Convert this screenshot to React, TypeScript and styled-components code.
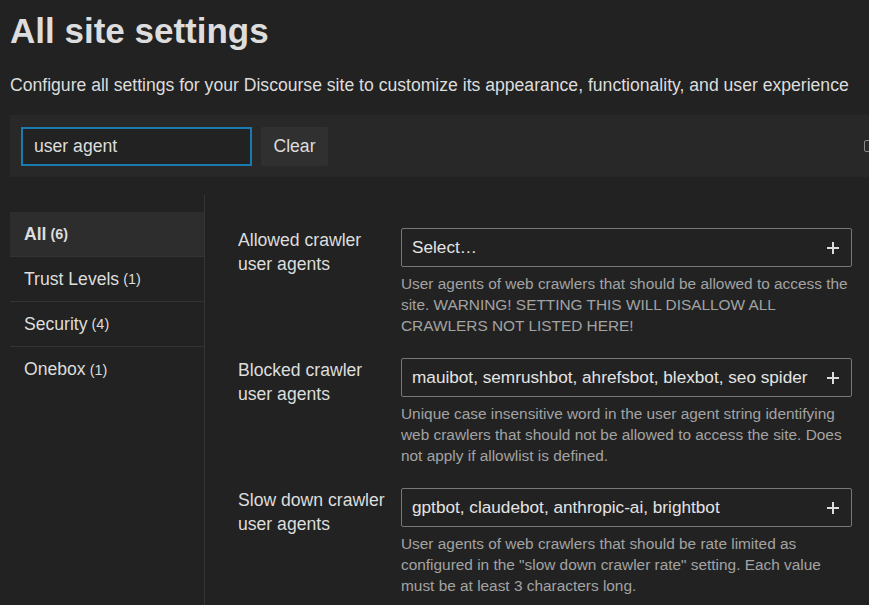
import styled, { createGlobalStyle } from "styled-components";

// 한 줄에 하나의 설정 항목
interface ISetting {
  id: string;
  label: string;
  value: string;
  description: string;
}

interface ICategory {
  name: string;
  count: number;
  active?: boolean;
}

const categories: ICategory[] = [
  { name: "All", count: 6, active: true },
  { name: "Trust Levels", count: 1 },
  { name: "Security", count: 4 },
  { name: "Onebox", count: 1 },
];

const settings: ISetting[] = [
  {
    id: "allowed",
    label: "Allowed crawler user agents",
    value: "Select…",
    description:
      "User agents of web crawlers that should be allowed to access the site. WARNING! SETTING THIS WILL DISALLOW ALL CRAWLERS NOT LISTED HERE!",
  },
  {
    id: "blocked",
    label: "Blocked crawler user agents",
    value: "mauibot, semrushbot, ahrefsbot, blexbot, seo spider",
    description:
      "Unique case insensitive word in the user agent string identifying web crawlers that should not be allowed to access the site. Does not apply if allowlist is defined.",
  },
  {
    id: "slow",
    label: "Slow down crawler user agents",
    value: "gptbot, claudebot, anthropic-ai, brightbot",
    description:
      'User agents of web crawlers that should be rate limited as configured in the "slow down crawler rate" setting. Each value must be at least 3 characters long.',
  },
];

function PlusIcon() {
  return (
    <svg width="14" height="14" viewBox="0 0 14 14" aria-hidden="true">
      <path d="M7 1v12M1 7h12" stroke="#dddddd" strokeWidth="2" />
    </svg>
  );
}

function App() {
  return (
    <>
      <GlobalStyle />
      <Page>
        <Title>All site settings</Title>
        <Subtitle>
          Configure all settings for your Discourse site to customize its
          appearance, functionality, and user experience
        </Subtitle>
        <Toolbar>
          <SearchInput defaultValue="user agent" />
          <ClearButton>Clear</ClearButton>
          {/* 오른쪽 끝 체크박스는 화면 밖으로 잘려 있음 */}
          <CheckBox type="checkbox" aria-label="Only show overridden" />
        </Toolbar>
        <Layout>
          <Sidebar>
            {categories.map((cat) => (
              <CategoryItem key={cat.name} $active={cat.active}>
                {cat.name} <Count>({cat.count})</Count>
              </CategoryItem>
            ))}
          </Sidebar>
          <Content>
            {settings.map((s) => (
              <SettingRow key={s.id}>
                <SettingLabel>{s.label}</SettingLabel>
                <SettingValue>
                  <ListInput>
                    <ListText>{s.value}</ListText>
                    <PlusIcon />
                  </ListInput>
                  <Description>{s.description}</Description>
                </SettingValue>
              </SettingRow>
            ))}
          </Content>
        </Layout>
      </Page>
    </>
  );
}

export default App;

const GlobalStyle = createGlobalStyle`
  html, body {
    margin: 0;
    background: #222222;
    overflow: hidden;
  }
  body {
    font-family: "Liberation Sans", Arial, sans-serif;
    color: #dddddd;
  }
  * {
    box-sizing: border-box;
  }
`;

const Page = styled.div`
  padding-left: 10px;
  min-height: 605px;
`;

const Title = styled.h1`
  margin: 0;
  padding-top: 8px;
  font-size: 35px;
  line-height: 46px;
  font-weight: bold;
  color: #dddddd;
`;

const Subtitle = styled.p`
  margin: 19px 0 0;
  font-size: 17.6px;
  line-height: 24px;
  color: #dddddd;
`;

const Toolbar = styled.div`
  margin-top: 18px;
  height: 62px;
  display: flex;
  align-items: center;
  padding-left: 11px;
  background: #282828;
`;

const SearchInput = styled.input`
  width: 231px;
  height: 39px;
  padding: 0 11px;
  background: #222222;
  border: 2px solid #1a7bb0;
  color: #dddddd;
  font-family: inherit;
  font-size: 17.6px;
  outline: none;
`;

const ClearButton = styled.button`
  margin-left: 9px;
  width: 67px;
  height: 39px;
  border: none;
  border-radius: 2px;
  background: #303030;
  color: #dddddd;
  font-family: inherit;
  font-size: 17.6px;
`;

const CheckBox = styled.input`
  appearance: none;
  flex-shrink: 0;
  margin: 0 -7px 0 auto;
  width: 12px;
  height: 12px;
  border: 1px solid #8a8a8a;
  border-radius: 2px;
  background: #2a2a2a;
`;

const Layout = styled.div`
  margin-top: 18px;
  display: flex;
  align-items: stretch;
`;

const Sidebar = styled.ul`
  margin: 0;
  padding: 17px 0 0;
  list-style: none;
  width: 195px;
  flex-shrink: 0;
  border-right: 1px solid #343434;
  min-height: 420px;
`;

const CategoryItem = styled.li<{ $active?: boolean }>`
  height: 45px;
  display: flex;
  align-items: center;
  gap: 4px;
  padding-left: 14px;
  font-size: 17.6px;
  font-weight: ${(props) => (props.$active ? "bold" : "normal")};
  background: ${(props) => (props.$active ? "#2d2d2d" : "transparent")};
  border-bottom: 1px solid #333333;
  &:last-child {
    border-bottom: none;
  }
`;

const Count = styled.span`
  font-size: 14.4px;
`;

const Content = styled.div`
  flex: 1;
  padding: 33px 0 0 33px;
`;

const SettingRow = styled.div`
  display: flex;
  align-items: flex-start;
  margin-bottom: 22px;
`;

const SettingLabel = styled.div`
  width: 163px;
  flex-shrink: 0;
  padding-right: 12px;
  font-size: 17.6px;
  line-height: 24px;
  color: #dddddd;
`;

const SettingValue = styled.div`
  width: 451px;
`;

const ListInput = styled.div`
  height: 39px;
  display: flex;
  align-items: center;
  gap: 4px;
  padding: 0 11px 0 10px;
  border: 1px solid #777777;
  border-radius: 2px;
  background: #222222;
`;

const ListText = styled.span`
  flex: 1;
  min-width: 0;
  overflow: hidden;
  white-space: nowrap;
  font-size: 17.2px;
  color: #e4e4e4;
`;

const Description = styled.div`
  margin-top: 6px;
  font-size: 15.4px;
  line-height: 21px;
  color: #a3a3a3;
`;
